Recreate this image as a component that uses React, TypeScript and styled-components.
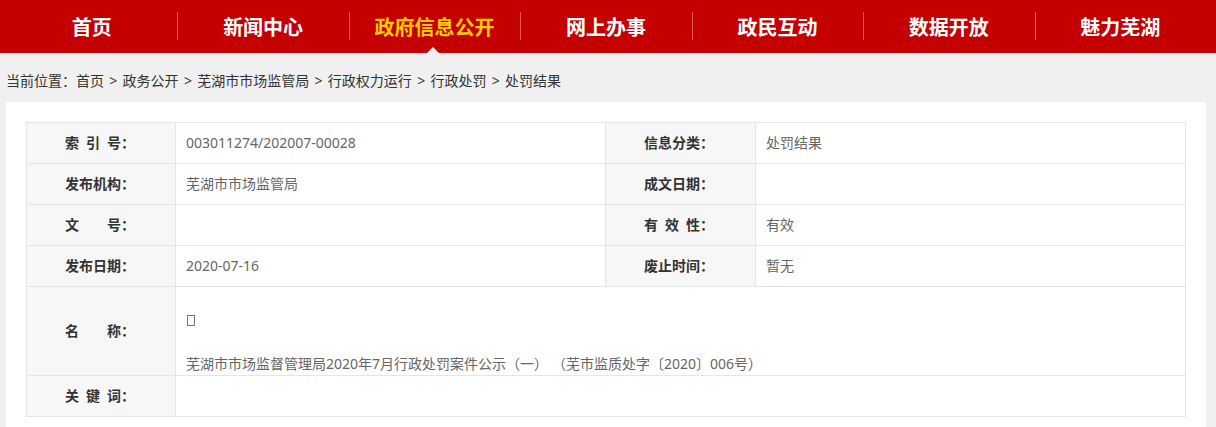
import React from "react"
import styled, { createGlobalStyle } from "styled-components"

const GlobalStyle = createGlobalStyle`
    html, body {
        margin: 0;
        padding: 0;
        background: #f0f0f0;
        font-family: "Microsoft YaHei", "Noto Sans", "Noto Sans CJK SC", sans-serif;
        font-size: 14px;
        color: #333;
    }
`

const navItems = ["首页", "新闻中心", "政府信息公开", "网上办事", "政民互动", "数据开放", "魅力芜湖"]
const activeNav = 2

const crumbs = ["首页", "政务公开", "芜湖市市场监管局", "行政权力运行", "行政处罚", "处罚结果"]

const App = () => {
    return (
        <>
            <GlobalStyle />
            <NavBar>
                <NavInner>
                    {navItems.map((item, index) => (
                        <NavItem key={index} $active={index === activeNav} $first={index === 0}>
                            {item}
                            {index === activeNav && <NavArrow />}
                        </NavItem>
                    ))}
                </NavInner>
            </NavBar>

            <Page>
                <Breadcrumb>
                    当前位置：
                    {crumbs.map((crumb, index) => (
                        <React.Fragment key={index}>
                            {index > 0 && <CrumbSep>&gt;</CrumbSep>}
                            <span>{crumb}</span>
                        </React.Fragment>
                    ))}
                </Breadcrumb>

                <Card>
                    <InfoTable>
                        <colgroup>
                            <col style={{ width: 149 }} />
                            <col style={{ width: 430 }} />
                            <col style={{ width: 150 }} />
                            <col style={{ width: 430 }} />
                        </colgroup>
                        <tbody>
                            <tr>
                                <Label>
                                    索<Gap $w={7} />引<Gap $w={7} />号：
                                </Label>
                                <Value>003011274/202007-00028</Value>
                                <Label>信息分类：</Label>
                                <Value>处罚结果</Value>
                            </tr>
                            <tr>
                                <Label>发布机构：</Label>
                                <Value>芜湖市市场监管局</Value>
                                <Label>成文日期：</Label>
                                <Value></Value>
                            </tr>
                            <tr>
                                <Label>
                                    文<Gap $w={28} />号：
                                </Label>
                                <Value></Value>
                                <Label>
                                    有<Gap $w={7} />效<Gap $w={7} />性：
                                </Label>
                                <Value>有效</Value>
                            </tr>
                            <tr>
                                <Label>发布日期：</Label>
                                <Value>2020-07-16</Value>
                                <Label>废止时间：</Label>
                                <Value>暂无</Value>
                            </tr>
                            <tr>
                                <Label>
                                    名<Gap $w={28} />称：
                                </Label>
                                <NameValue colSpan={3}>
                                    <Line>
                                        <Tofu />
                                    </Line>
                                    <Line />
                                    <Line>
                                        芜湖市市场监督管理局2020年7月行政处罚案件公示（一）<Gap $w={4} />（芜市监质处字〔2020〕006号）
                                    </Line>
                                </NameValue>
                            </tr>
                            <tr>
                                <Label>
                                    关<Gap $w={7} />键<Gap $w={7} />词：
                                </Label>
                                <Value colSpan={3}></Value>
                            </tr>
                        </tbody>
                    </InfoTable>
                </Card>
            </Page>
        </>
    )
}

const NavBar = styled.div`
    background: #c40000;
    height: 53px;
    padding-left: 6px;
`

const NavInner = styled.div`
    width: 1200px;
    display: flex;
    height: 100%;
`

const NavItem = styled.div<{ $active: boolean; $first: boolean }>`
    position: relative;
    flex: 1;
    text-align: center;
    line-height: 53px;
    font-size: 20px;
    font-weight: bold;
    font-family: "Noto Sans CJK SC", sans-serif;
    color: ${(props) => (props.$active ? "#ffcc00" : "#fff")};

    &::before {
        content: "";
        display: ${(props) => (props.$first ? "none" : "block")};
        position: absolute;
        left: 0;
        top: 12px;
        height: 28px;
        width: 1px;
        background: #e65454;
    }
`

const NavArrow = styled.span`
    position: absolute;
    left: 50%;
    bottom: 0;
    margin-left: -8px;
    width: 0;
    height: 0;
    border-left: 6px solid transparent;
    border-right: 6px solid transparent;
    border-bottom: 6px solid #f0f0f0;
`

const Page = styled.div`
    width: 1200px;
    padding-left: 6px;
`

const Breadcrumb = styled.div`
    padding: 17px 0 10px;
    line-height: 22px;
    font-size: 14px;
    color: #333;
`

const CrumbSep = styled.span`
    margin: 0 5.3px;
`

const Card = styled.div`
    background: #fff;
    padding: 20px 20px 30px;
`

const InfoTable = styled.table`
    width: 1160px;
    table-layout: fixed;
    border-collapse: collapse;
    font-size: 14px;
`

const Label = styled.td`
    background: #f7f7f7;
    border: 1px solid #e5e5e5;
    text-align: left;
    font-weight: bold;
    color: #333;
    height: 40px;
    padding: 0 0 0 38px;
    line-height: 22px;
    white-space: nowrap;
`

const Value = styled.td`
    border: 1px solid #e5e5e5;
    color: #666;
    height: 40px;
    padding: 0 10px;
    line-height: 22px;
`

const NameValue = styled.td`
    border: 1px solid #e5e5e5;
    color: #666;
    padding: 22px 10px 0;
    line-height: 22px;
`

const Line = styled.div`
    height: 22px;
    white-space: nowrap;
`

const Tofu = styled.span`
    display: inline-block;
    width: 6px;
    height: 9px;
    border: 1px solid #777;
    vertical-align: -1px;
    margin-left: 1px;
`

const Gap = styled.span<{ $w: number }>`
    display: inline-block;
    width: ${(props) => props.$w}px;
`

export default App
